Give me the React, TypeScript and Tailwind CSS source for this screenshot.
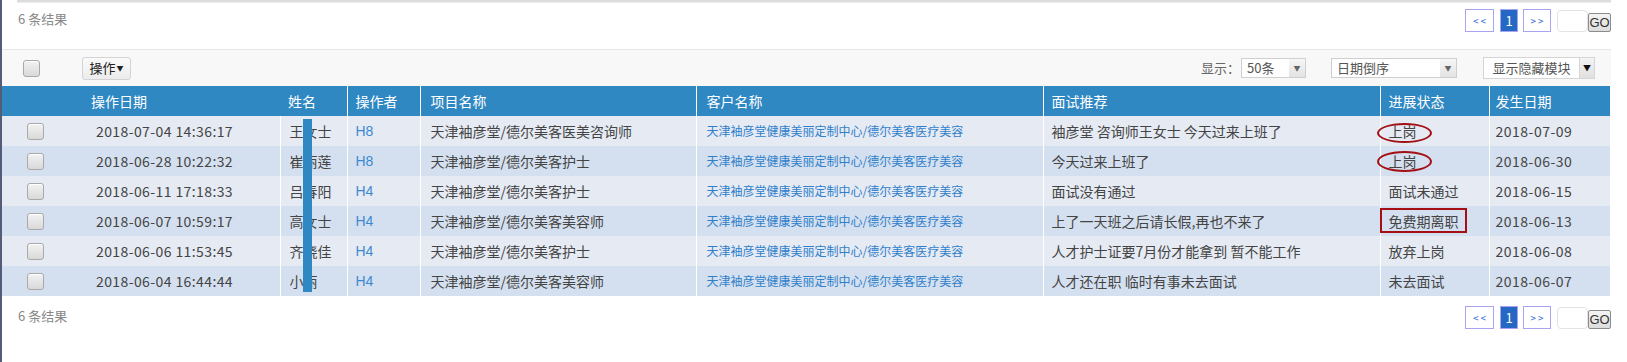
import React from "react";

type Row = {
  time: string;
  name: string;
  op: string;
  project: string;
  customer: string;
  note: string;
  status: string;
  date: string;
};

const rows: Row[] = [
  { time: "2018-07-04 14:36:17", name: "王女士", op: "H8", project: "天津袖彦堂/德尔美客医美咨询师", customer: "天津袖彦堂健康美丽定制中心/德尔美客医疗美容", note: "袖彦堂 咨询师王女士 今天过来上班了", status: "上岗", date: "2018-07-09" },
  { time: "2018-06-28 10:22:32", name: "崔丽莲", op: "H8", project: "天津袖彦堂/德尔美客护士", customer: "天津袖彦堂健康美丽定制中心/德尔美客医疗美容", note: "今天过来上班了", status: "上岗", date: "2018-06-30" },
  { time: "2018-06-11 17:18:33", name: "吕春阳", op: "H4", project: "天津袖彦堂/德尔美客护士", customer: "天津袖彦堂健康美丽定制中心/德尔美客医疗美容", note: "面试没有通过", status: "面试未通过", date: "2018-06-15" },
  { time: "2018-06-07 10:59:17", name: "高女士", op: "H4", project: "天津袖彦堂/德尔美客美容师", customer: "天津袖彦堂健康美丽定制中心/德尔美客医疗美容", note: "上了一天班之后请长假,再也不来了", status: "免费期离职", date: "2018-06-13" },
  { time: "2018-06-06 11:53:45", name: "齐晓佳", op: "H4", project: "天津袖彦堂/德尔美客护士", customer: "天津袖彦堂健康美丽定制中心/德尔美客医疗美容", note: "人才护士证要7月份才能拿到 暂不能工作", status: "放弃上岗", date: "2018-06-08" },
  { time: "2018-06-04 16:44:44", name: "小丽", op: "H4", project: "天津袖彦堂/德尔美客美容师", customer: "天津袖彦堂健康美丽定制中心/德尔美客医疗美容", note: "人才还在职 临时有事未去面试", status: "未去面试", date: "2018-06-07" },
];

const Check = () => (
  <span className="block w-[17px] h-[17px] rounded-[3px] border border-[#a9a9a9] bg-gradient-to-b from-[#f2f2f2] to-[#d9d9d9] shadow-[inset_0_1px_0_#fff]" />
);

const Pager = () => (
  <div className="flex items-end">
    <span className="w-[29px] h-[23px] border border-[#a9a4f2] flex items-center justify-center text-[10px] text-[#2a62d0] tracking-[2px] pl-[2px]">&lt;&lt;</span>
    <span className="ml-[6px] w-[18px] h-[23px] border border-[#a9a4f2] bg-[#2468c4] flex items-center justify-center text-[13px] text-white">1</span>
    <span className="ml-[5px] w-[28px] h-[23px] border border-[#a9a4f2] flex items-center justify-center text-[10px] text-[#2a62d0] tracking-[2px] pl-[2px]">&gt;&gt;</span>
    <span className="ml-[6px] w-[31px] h-[22px] rounded-[4px] border border-[#e3e3e3] bg-white" />
    <span className="w-[23px] h-[19px] rounded-[2px] border border-[#8c8c8c] bg-gradient-to-b from-[#f4f4f4] to-[#dcdcdc] flex items-center justify-center text-[13px] text-[#333] font-['Liberation_Sans',sans-serif]">GO</span>
  </div>
);

export default function App() {
  return (
    <div className="min-h-[362px] bg-white border-l-2 border-[#555c77] font-['Microsoft_YaHei','Noto_Sans_CJK_SC',sans-serif] text-[14px] text-[#444]">
      <div className="w-[1609px]">
        <div className="ml-[15px] h-[2px] bg-[#dcdcdc] shadow-[0_1px_1px_#eee]" />
        <div className="h-[47px] flex items-start justify-between pl-4 pt-[7px]">
          <span className="text-[13px] text-[#888]">6 条结果</span>
          <Pager />
        </div>

        <div className="h-[37px] border-t border-[#e6e6e6] bg-[#f8f8f8] flex items-center">
          <div className="ml-[21px]"><Check /></div>
          <button className="ml-[42px] w-[49px] h-[23px] rounded-[3px] border border-[#d4d4d4] bg-gradient-to-b from-[#fafafa] to-[#ececec] text-[13px] text-[#222] flex items-center justify-center">
            操作<span className="text-[7px] ml-[1px]">▼</span>
          </button>
          <div className="flex-1" />
          <span className="text-[13px] text-[#666]">显示：</span>
          <div className="ml-[1px] w-[65px] h-[20px] border border-[#cfcfcf] bg-white flex items-center text-[13px] text-[#555]">
            <span className="pl-[5px] flex-1">50条</span>
            <span className="w-[16px] h-full bg-gradient-to-b from-[#f6f6f6] to-[#e3e3e3] flex items-center justify-center text-[7px] text-[#666]">▼</span>
          </div>
          <div className="ml-[25px] w-[126px] h-[20px] border border-[#cfcfcf] bg-white flex items-center text-[13px] text-[#555]">
            <span className="pl-[5px] flex-1">日期倒序</span>
            <span className="w-[16px] h-full bg-gradient-to-b from-[#f6f6f6] to-[#e3e3e3] flex items-center justify-center text-[7px] text-[#666]">▼</span>
          </div>
          <div className="ml-[26px] h-[22px] flex">
            <span className="w-[97px] h-full border border-[#d6d6d6] bg-white flex items-center justify-center text-[13px] text-[#555]">显示隐藏模块</span>
            <span className="w-[15px] h-full border border-l-0 border-[#d6d6d6] bg-gradient-to-b from-[#f4f4f4] to-[#e0e0e0] flex items-center justify-center text-[8px] text-[#111]">▼</span>
          </div>
          <div className="w-[16px]" />
        </div>

        <div className="relative w-[1608px]">
          <table className="w-[1608px] table-fixed border-collapse">
            <colgroup>
              <col className="w-[68px]" />
              <col className="w-[210px]" />
              <col className="w-[67px]" />
              <col className="w-[73px]" />
              <col className="w-[276px]" />
              <col className="w-[347px]" />
              <col className="w-[337px]" />
              <col className="w-[109px]" />
              <col className="w-[121px]" />
            </colgroup>
            <thead>
              <tr className="h-[30px] bg-[#2f88c2] text-white text-left">
                <th className="font-normal p-0" />
                <th className="font-normal p-0 pl-[21px]">操作日期</th>
                <th className="font-normal p-0 pl-[8px] border-r border-white">姓名</th>
                <th className="font-normal p-0 pl-[8px] border-r border-white">操作者</th>
                <th className="font-normal p-0 pl-[10px] border-r border-white">项目名称</th>
                <th className="font-normal p-0 pl-[10px] border-r border-white">客户名称</th>
                <th className="font-normal p-0 pl-[8px] border-r border-white">面试推荐</th>
                <th className="font-normal p-0 pl-[8px] border-r border-white">进展状态</th>
                <th className="font-normal p-0 pl-[6px]">发生日期</th>
              </tr>
            </thead>
            <tbody>
              {rows.map((r, i) => (
                <tr key={i} className={`h-[30px] ${i % 2 === 0 ? "bg-[#e5eaf3]" : "bg-[#d4e0ef]"}`}>
                  <td className="p-0 pl-[25px]"><Check /></td>
                  <td className="p-0 pl-[26px] border-r border-white whitespace-nowrap tracking-[0.4px]">{r.time}</td>
                  <td className="p-0 pl-[9px] border-r border-white whitespace-nowrap">{r.name}</td>
                  <td className="p-0 pl-[8px] border-r border-white text-[#3d89cf] font-['Liberation_Sans',sans-serif]">{r.op}</td>
                  <td className="p-0 pl-[10px] border-r border-white whitespace-nowrap">{r.project}</td>
                  <td className="p-0 pl-[10px] border-r border-white whitespace-nowrap text-[12px] text-[#2f7fcb]">{r.customer}</td>
                  <td className="p-0 pl-[8px] border-r border-white whitespace-nowrap">{r.note}</td>
                  <td className="p-0 pl-[8px] border-r border-white whitespace-nowrap">{r.status}</td>
                  <td className="p-0 pl-[6px] whitespace-nowrap tracking-[0.5px]">{r.date}</td>
                </tr>
              ))}
            </tbody>
          </table>
          <div className="absolute left-[301px] top-[33px] w-[9px] h-[173px] bg-[#2f88c2]" />
          <div className="absolute left-[1375px] top-[37px] w-[55px] h-[20px] rounded-[50%] border-2 border-[#a30f12]" />
          <div className="absolute left-[1375px] top-[65px] w-[55px] h-[21px] rounded-[50%] border-2 border-[#a30f12]" />
          <div className="absolute left-[1378px] top-[122px] w-[87px] h-[25px] border-2 border-[#a30f12]" />
        </div>

        <div className="h-[66px] flex items-start justify-between pl-4 pt-[10px]">
          <span className="text-[13px] text-[#888]">6 条结果</span>
          <Pager />
        </div>
      </div>
    </div>
  );
}
